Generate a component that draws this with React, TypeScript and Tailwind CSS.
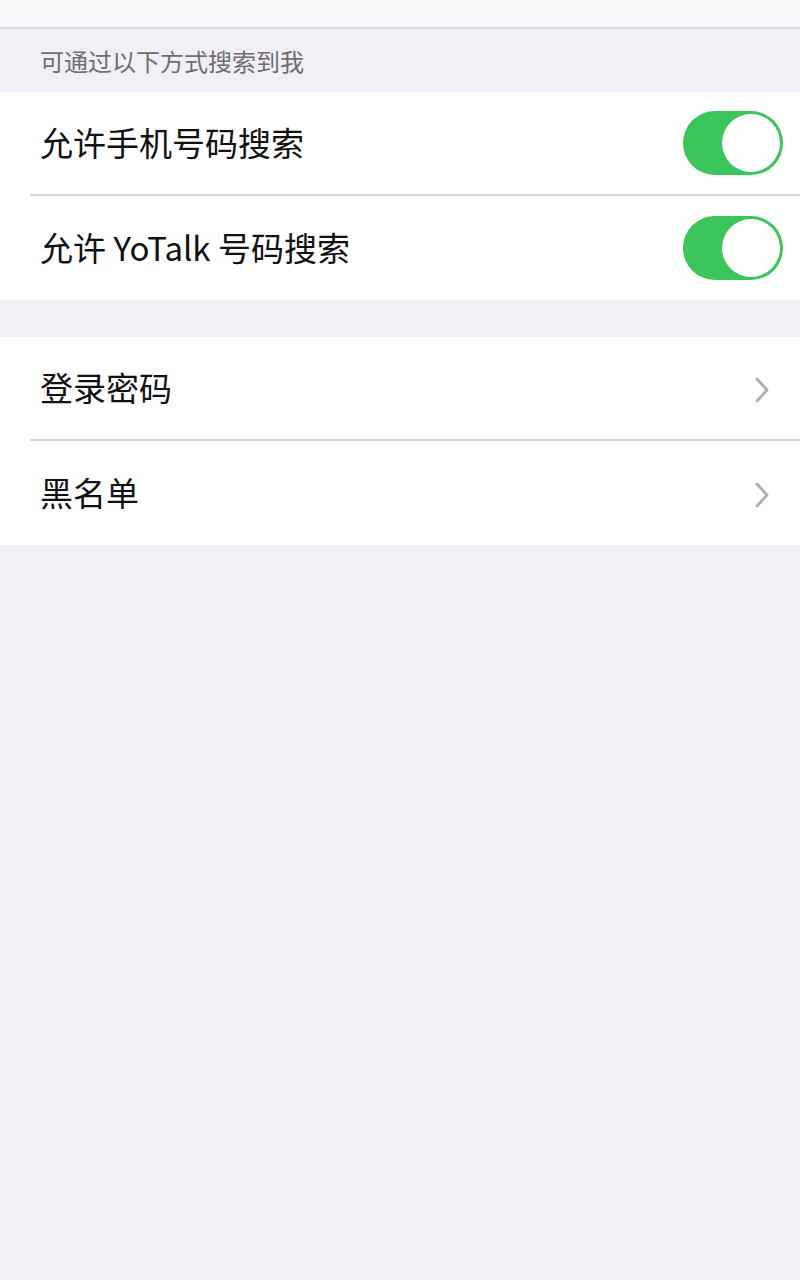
import { ChevronLeft } from 'lucide-react';

const font = { fontFamily: '"Noto Sans CJK SC", "Noto Sans", sans-serif' };

function Toggle() {
  return (
    <div className="w-[100px] h-[64px] rounded-full bg-[#3cc55b] p-[3px] flex justify-end shrink-0 mr-[-13px]">
      <div className="w-[58px] h-[58px] rounded-full bg-white" />
    </div>
  );
}

function Chevron() {
  return (
    <svg width="16" height="26" viewBox="0 0 16 26" className="shrink-0 mt-[4px]">
      <path d="M3 2 L13 13 L3 24" fill="none" stroke="#adadb2" strokeWidth="2.8" strokeLinecap="round" strokeLinejoin="round" />
    </svg>
  );
}

function Row({ label, children, divider }: { label: string; children: React.ReactNode; divider?: boolean }) {
  return (
    <div className="pl-[30px]">
      <div className={`h-[104px] flex items-center justify-between pl-[10px] pr-[30px] ${divider ? 'border-b-2 border-[#d6d6da]' : ''}`}>
        <span className="text-[33px] text-[#111]">{label}</span>
        {children}
      </div>
    </div>
  );
}

export default function App() {
  return (
    <div className="min-h-[1280px] bg-[#f1f0f6]" style={font}>
      {/* Nav bar (mostly scrolled off) */}
      <div className="h-[29px] bg-[#f9f9fb] border-b-2 border-[#dcdce0] overflow-hidden relative">
        <ChevronLeft className="absolute left-[26px] -top-[29px] w-[32px] h-[32px] text-[#888]" strokeWidth={2} />
        <div className="absolute left-0 right-0 -top-[44px] text-center text-[34px] font-semibold text-[#bbb]">隐私与安全</div>
      </div>

      <div className="h-[63px] flex items-center pl-[40px] text-[24px] text-[#6d6d72]">可通过以下方式搜索到我</div>

      <div className="bg-white">
        <Row label="允许手机号码搜索" divider>
          <Toggle />
        </Row>
        <Row label="允许 YoTalk 号码搜索">
          <Toggle />
        </Row>
      </div>

      <div className="h-[37px]" />

      <div className="bg-white">
        <Row label="登录密码" divider>
          <Chevron />
        </Row>
        <Row label="黑名单">
          <Chevron />
        </Row>
      </div>
    </div>
  );
}
